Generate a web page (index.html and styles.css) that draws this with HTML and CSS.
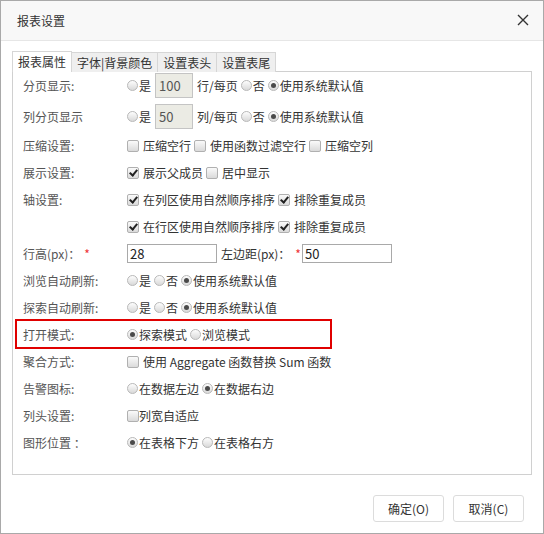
FILE: index.html
```html
<!DOCTYPE html>
<html lang="zh-CN">
<head>
  <meta charset="UTF-8" />
  <title>报表设置</title>
  <link rel="stylesheet" href="styles.css">
</head>
<body>

<div class="dialog">
  <div class="dialog-head">
    <span class="dialog-title">报表设置</span>
    <svg class="close" width="12" height="12" viewBox="0 0 12 12">
      <path d="M1 1 L11 11 M11 1 L1 11" stroke="#333" stroke-width="1.4" fill="none" />
    </svg>
  </div>

  <div class="dialog-body">
    <div class="tabs">
      <div class="tab active">报表属性</div>
      <div class="tab">字体|背景颜色</div>
      <div class="tab">设置表头</div>
      <div class="tab">设置表尾</div>
    </div>

    <div class="panel">
      <div class="row">
        <div class="label">分页显示:</div>
        <div class="ctrl">
          <span class="radio"></span><span class="txt">是</span>
          <input class="num" type="text" value="100" disabled />
          <span class="txt">行/每页</span>
          <span class="radio"></span><span class="txt">否</span>
          <span class="radio on"></span><span class="txt">使用系统默认值</span>
        </div>
      </div>
      <div class="row row-second">
        <div class="label">列分页显示</div>
        <div class="ctrl">
          <span class="radio"></span><span class="txt">是</span>
          <input class="num" type="text" value="50" disabled />
          <span class="txt">列/每页</span>
          <span class="radio"></span><span class="txt">否</span>
          <span class="radio on"></span><span class="txt">使用系统默认值</span>
        </div>
      </div>
      <div class="row row-third">
        <div class="label">压缩设置:</div>
        <div class="ctrl">
          <span class="check"></span><span class="txt sp">压缩空行</span>
          <span class="check"></span><span class="txt sp">使用函数过滤空行</span>
          <span class="check"></span><span class="txt sp">压缩空列</span>
        </div>
      </div>
      <div class="row">
        <div class="label">展示设置:</div>
        <div class="ctrl">
          <span class="check on"></span><span class="txt sp">展示父成员</span>
          <span class="check"></span><span class="txt sp">居中显示</span>
        </div>
      </div>
      <div class="row">
        <div class="label">轴设置:</div>
        <div class="ctrl">
          <span class="check on"></span><span class="txt sp">在列区使用自然顺序排序</span>
          <span class="check on"></span><span class="txt sp">排除重复成员</span>
        </div>
      </div>
      <div class="row">
        <div class="label"></div>
        <div class="ctrl">
          <span class="check on"></span><span class="txt sp">在行区使用自然顺序排序</span>
          <span class="check on"></span><span class="txt sp">排除重复成员</span>
        </div>
      </div>
      <div class="row">
        <div class="label">行高(px)：<span class="req">*</span></div>
        <div class="ctrl">
          <input class="field" type="text" value="28" />
          <span class="txt gap">左边距(px)：</span><span class="req">*</span>
          <input class="field" type="text" value="50" />
        </div>
      </div>
      <div class="row">
        <div class="label">浏览自动刷新:</div>
        <div class="ctrl">
          <span class="radio"></span><span class="txt">是</span>
          <span class="radio"></span><span class="txt">否</span>
          <span class="radio on"></span><span class="txt">使用系统默认值</span>
        </div>
      </div>
      <div class="row">
        <div class="label">探索自动刷新:</div>
        <div class="ctrl">
          <span class="radio"></span><span class="txt">是</span>
          <span class="radio"></span><span class="txt">否</span>
          <span class="radio on"></span><span class="txt">使用系统默认值</span>
        </div>
      </div>
      <div class="row row-mark">
        <div class="label">打开模式:</div>
        <div class="ctrl">
          <span class="radio on"></span><span class="txt">探索模式</span>
          <span class="radio"></span><span class="txt">浏览模式</span>
        </div>
      </div>
      <div class="row">
        <div class="label">聚合方式:</div>
        <div class="ctrl">
          <span class="check"></span><span class="txt sp">使用 Aggregate 函数替换 Sum 函数</span>
        </div>
      </div>
      <div class="row">
        <div class="label">告警图标:</div>
        <div class="ctrl">
          <span class="radio"></span><span class="txt">在数据左边</span>
          <span class="radio on"></span><span class="txt">在数据右边</span>
        </div>
      </div>
      <div class="row">
        <div class="label">列头设置:</div>
        <div class="ctrl">
          <span class="check"></span><span class="txt">列宽自适应</span>
        </div>
      </div>
      <div class="row">
        <div class="label">图形位置 ：</div>
        <div class="ctrl">
          <span class="radio on"></span><span class="txt">在表格下方</span>
          <span class="radio"></span><span class="txt">在表格右方</span>
        </div>
      </div>
    </div>
  </div>

  <div class="dialog-foot">
    <button class="btn">确定(O)</button>
    <button class="btn">取消(C)</button>
  </div>
</div>

</body>
</html>
```

FILE: styles.css
```css
body {
  margin: 0;
  font-family: "Noto Sans CJK SC", "Microsoft YaHei", sans-serif;
  font-size: 12px;
  color: #333;
  background: #fff;
}
.dialog {
  width: 544px;
  height: 534px;
  box-sizing: border-box;
  border: 1px solid #a9a9a9;
  display: flex;
  flex-direction: column;
  background: #fff;
}
.dialog-head {
  height: 39px;
  background: #f8f8f8;
  border-bottom: 1px solid #e6e6e6;
  display: flex;
  align-items: center;
  justify-content: space-between;
  padding: 0 14px 0 16px;
}
.dialog-title {
  font-size: 12px;
  color: #333;
}
.close {
  margin-top: -1px;
}
.dialog-body {
  padding: 10px 11px 0 11px;
}
.tabs {
  display: flex;
  height: 21px;
  margin-bottom: -1px;
}
.tab {
  height: 20px;
  line-height: 19px;
  padding: 0 5px;
  background: #efefef;
  border: 1px solid #d6d6d6;
  border-left: none;
  border-bottom: none;
  color: #333;
  font-size: 12px;
  box-sizing: border-box;
  margin-top: 1px;
}
.tab.active {
  background: #fff;
  border-left: 1px solid #d6d6d6;
  height: 21px;
  margin-top: 0;
  line-height: 20px;
  position: relative;
  z-index: 1;
}
.panel {
  border: 1px solid #d0d0d0;
  height: 404px;
  box-sizing: border-box;
  padding: 0 10px;
}
.row {
  display: flex;
  align-items: center;
  height: 27px;
}
.row-second {
  margin-top: 4px;
}
.row-third {
  margin-top: 2px;
}
.row-mark {
  border: 2px solid #e00000;
  width: 317px;
  box-sizing: border-box;
  height: 30px;
  margin: -2px 0 -1px -8px;
  padding-left: 6px;
}
.label {
  width: 104px;
  flex: none;
  color: #555;
}
.req {
  color: #e33;
  margin-left: 4px;
}
.ctrl {
  display: flex;
  align-items: center;
  white-space: nowrap;
  color: #333;
}
.txt {
  margin-right: 3px;
}
.txt.sp {
  margin-left: 4px;
}
.txt.gap {
  margin-left: 4px;
}
.ctrl .req {
  margin-left: 2px;
  margin-right: 1px;
}
.radio {
  width: 11px;
  height: 11px;
  box-sizing: border-box;
  border-radius: 50%;
  border: 1px solid #b8b8b8;
  background: linear-gradient(#fdfdfd, #d9d9d9);
  margin-right: 1px;
  display: flex;
  align-items: center;
  justify-content: center;
}
.radio.on::after {
  content: "";
  width: 5px;
  height: 5px;
  border-radius: 50%;
  background: #4a4a4a;
}
.check {
  width: 12px;
  height: 12px;
  box-sizing: border-box;
  border-radius: 2px;
  border: 1px solid #b0b0b0;
  background: linear-gradient(#fafafa, #dadada);
  position: relative;
}
.check.on::after {
  content: "";
  position: absolute;
  left: 3px;
  top: 0px;
  width: 3px;
  height: 6px;
  border: solid #222;
  border-width: 0 2px 2px 0;
  transform: rotate(40deg);
}
.num {
  width: 38px;
  height: 25px;
  box-sizing: border-box;
  border: 1px solid #c4c4c4;
  background: #ebebe4;
  color: #555;
  font: inherit;
  font-size: 13px;
  padding: 0 3px;
  margin: 0 4px 0 1px;
}
.field {
  width: 90px;
  height: 19px;
  box-sizing: border-box;
  border: 1px solid #a9a9a9;
  font: inherit;
  font-size: 13px;
  color: #222;
  padding: 0 2px;
}
.dialog-foot {
  flex: 1;
  display: flex;
  justify-content: flex-end;
  align-items: center;
  gap: 9px;
  padding: 8px 19px 0 0;
}
.btn {
  width: 71px;
  height: 27px;
  border: 1px solid #dcdcdc;
  border-radius: 3px;
  background: #fff;
  font: inherit;
  color: #333;
}
```
